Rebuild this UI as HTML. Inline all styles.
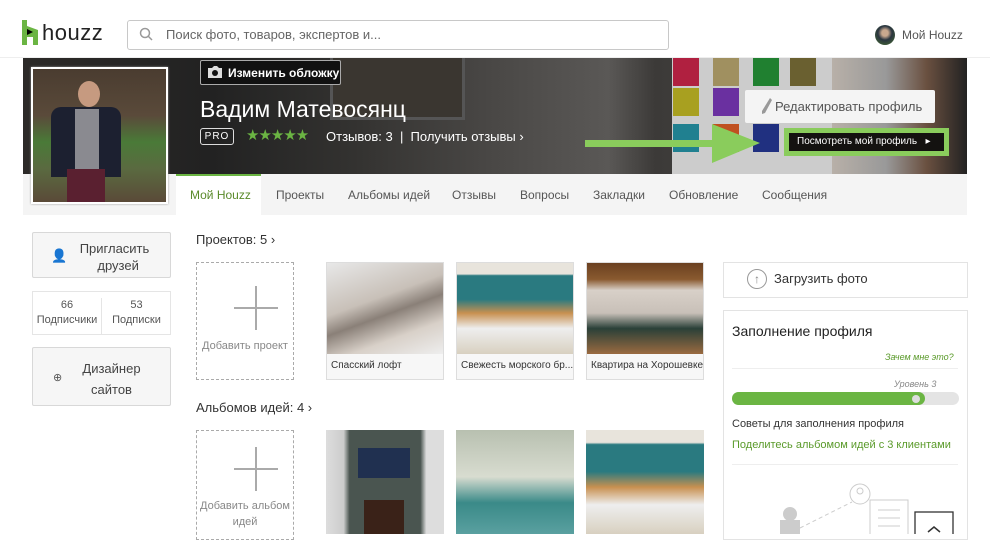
<!DOCTYPE html>
<html><head><meta charset="utf-8"><style>
*{margin:0;padding:0;box-sizing:border-box}
body{width:990px;height:534px;overflow:hidden;background:#fff;font-family:"Liberation Sans",Arial,sans-serif;color:#333;position:relative}
.a{position:absolute;white-space:nowrap}
.tile{position:absolute;width:26px;height:28px}
.tab{position:absolute;top:188px;font-size:12px;color:#555}
.card{position:absolute;width:118px;height:118px;border:1px solid #ddd;background:#f7f7f7}
.card .img{height:91px}
.card .cap{font-size:10px;color:#333;padding:6px 4px;white-space:nowrap;overflow:hidden}
.btn{position:absolute;left:32px;width:139px;border:1px solid #d8d8d8;border-radius:2px;background:#f6f6f6;font-size:13px;color:#444;text-align:center}
</style></head><body>
<!-- header -->
<div class="a" style="left:22px;top:20px;width:16px;height:25px">
<svg width="16" height="25" viewBox="0 0 16 25"><path d="M0 0h5v6l11 4v15h-5v-8H5v8H0z" fill="#6bb543"/><path d="M5 9l6 3-6 3z" fill="#000"/></svg></div>
<div class="a" style="left:42px;top:20px;font-size:22px;color:#222;letter-spacing:0.5px">houzz</div>
<div class="a" style="left:127px;top:20px;width:542px;height:30px;border:1px solid #c8c8c8;border-radius:3px"></div>
<svg class="a" style="left:139px;top:27px" width="14" height="14"><circle cx="6" cy="6" r="4.5" stroke="#999" stroke-width="1.5" fill="none"/><path d="M9 9l4 4" stroke="#999" stroke-width="1.5"/></svg>
<div class="a" style="left:166px;top:27px;font-size:13px;color:#666">Поиск фото, товаров, экспертов и...</div>
<div class="a" style="left:875px;top:25px;width:20px;height:20px;border-radius:50%;background:radial-gradient(circle at 50% 40%,#c9a88e 20%,#2a3540 45%,#3d5a35 80%)"></div>
<div class="a" style="left:902px;top:28px;font-size:12px;color:#555">Мой Houzz</div>
<div class="a" style="left:0;top:57px;width:990px;height:1px;background:#eee"></div>
<!-- cover -->
<div class="a" style="left:23px;top:58px;width:944px;height:116px;background:linear-gradient(90deg,#2c2a28 0%,#222 20%,#333230 35%,#4a4846 50%,#5a5856 62%,#3c3a38 67%,#555 100%)"></div>
<div class="a" style="left:330px;top:58px;width:135px;height:62px;background:#3a3630;border:3px solid #555;border-top:none"></div>
<div class="a" style="left:672px;top:58px;width:160px;height:116px;background:#ccc"></div>
<div class="tile" style="left:673px;top:58px;background:#b02040"></div><div class="tile" style="left:713px;top:58px;background:#a09060"></div><div class="tile" style="left:753px;top:58px;background:#208030"></div><div class="tile" style="left:790px;top:58px;background:#6a6030"></div>
<div class="tile" style="left:673px;top:88px;background:#a8a020"></div><div class="tile" style="left:713px;top:88px;background:#6a30a0"></div>
<div class="tile" style="left:673px;top:124px;background:#208090"></div><div class="tile" style="left:713px;top:124px;background:#c05020"></div><div class="tile" style="left:753px;top:124px;background:#203080"></div>
<div class="a" style="left:832px;top:58px;width:135px;height:116px;background:linear-gradient(90deg,#b8b0a8,#999 40%,#6a5040 70%,#222)"></div>
<div class="a" style="left:200px;top:60px;width:141px;height:25px;background:#111;border:1px solid #aaa;border-radius:2px;color:#fff;font-size:12px;font-weight:bold;padding:5px 0 0 27px">Изменить обложку</div>
<svg class="a" style="left:207px;top:65px" width="16" height="14"><path d="M1 3h4l2-2h3l2 2h3v10H1z" fill="#ddd"/><circle cx="8" cy="8" r="3" fill="#111"/></svg>
<div class="a" style="left:200px;top:96px;font-size:23px;color:#fff">Вадим Матевосянц</div>
<div class="a" style="left:200px;top:128px;width:34px;height:17px;border:1px solid #ddd;border-radius:3px;color:#fff;font-size:10px;text-align:center;line-height:15px;letter-spacing:1px">PRO</div>
<div class="a" style="left:246px;top:126px;font-size:15px;color:#6bb543;letter-spacing:-1px">★★★★★</div>
<div class="a" style="left:326px;top:129px;font-size:13px;color:#fff">Отзывов: 3 &nbsp;|&nbsp; Получить отзывы ›</div>
<div class="a" style="left:745px;top:90px;width:190px;height:33px;background:#f4f4f4;border-radius:2px;font-size:13px;color:#555;padding:9px 0 0 30px">Редактировать профиль</div>
<svg class="a" style="left:761px;top:97px" width="12" height="18"><path d="M9 1l2 2-7 13-3 1 0-3z" fill="#999"/></svg>
<div class="a" style="left:585px;top:140px;width:130px;height:7px;background:#8acc5c"></div>
<svg class="a" style="left:712px;top:124px" width="50" height="40"><path d="M0 0l48 19L0 39z" fill="#8acc5c"/></svg>
<div class="a" style="left:784px;top:128px;width:165px;height:28px;border:5px solid #8acc5c;background:#141210;color:#fff;font-size:10px;padding:3px 0 0 8px">Посмотреть мой профиль &nbsp;&nbsp;▸</div>
<!-- tabs -->
<div class="a" style="left:23px;top:174px;width:944px;height:41px;background:#f4f4f4"></div>
<div class="a" style="left:176px;top:174px;width:85px;height:41px;background:#fff;border-top:2px solid #6bb543"></div>
<div class="tab" style="left:190px;color:#5a8a2a">Мой Houzz</div>
<div class="tab" style="left:276px">Проекты</div>
<div class="tab" style="left:348px">Альбомы идей</div>
<div class="tab" style="left:452px">Отзывы</div>
<div class="tab" style="left:520px">Вопросы</div>
<div class="tab" style="left:593px">Закладки</div>
<div class="tab" style="left:669px">Обновление</div>
<div class="tab" style="left:762px">Сообщения</div>
<!-- avatar -->
<div class="a" style="left:31px;top:67px;width:137px;height:137px;background:#fff;padding:2px;box-shadow:0 0 2px #999">
<div style="width:133px;height:133px;background:linear-gradient(180deg,#4a3c30 0%,#5a4a3a 35%,#4a7a38 55%,#5a6a40 75%,#5a4a38 100%);position:relative">
<div style="position:absolute;left:45px;top:12px;width:22px;height:26px;border-radius:50%;background:#c69a80"></div>
<div style="position:absolute;left:18px;top:38px;width:70px;height:70px;background:#1c2030;border-radius:10px 10px 0 0"></div>
<div style="position:absolute;left:42px;top:40px;width:24px;height:60px;background:#8a8a90"></div>
<div style="position:absolute;left:34px;top:100px;width:38px;height:33px;background:#5a2030"></div>
</div></div>
<!-- left column -->
<div class="btn" style="top:232px;height:46px;padding-top:7px;line-height:17px"><span style="position:absolute;left:18px;top:14px;font-size:13px;color:#555">👤</span><span style="margin-left:26px;display:inline-block">Пригласить<br>&nbsp;&nbsp;друзей</span></div>
<div class="a" style="left:32px;top:291px;width:139px;height:44px;border:1px solid #e5e5e5;font-size:11px;color:#555;text-align:center">
<div style="position:absolute;left:0;width:69px;top:6px;line-height:15px;border-right:1px solid #e5e5e5;height:36px">66<br>Подписчики</div>
<div style="position:absolute;left:69px;width:69px;top:6px;line-height:15px">53<br>Подписки</div></div>
<div class="btn" style="top:347px;height:59px;padding-top:10px;line-height:21px"><span style="position:absolute;left:20px;top:20px;font-size:11px;color:#555">⊕</span><span style="margin-left:20px;display:inline-block">Дизайнер<br>сайтов</span></div>
<!-- projects -->
<div class="a" style="left:196px;top:232px;font-size:13px;color:#333">Проектов: 5 ›</div>
<div class="a" style="left:196px;top:262px;width:98px;height:118px;border:1px dashed #aaa"></div>
<div class="a" style="top:307px;left:234px;width:44px;height:2px;background:#aaa"></div>
<div class="a" style="left:255px;top:286px;width:2px;height:44px;background:#aaa"></div>
<div class="a" style="left:196px;top:340px;width:98px;text-align:center;font-size:11px;color:#888">Добавить проект</div>
<div class="card" style="left:326px;top:262px"><div class="img" style="background:linear-gradient(160deg,#e8e8e8 0%,#c8c0b8 40%,#8a8078 55%,#d8d0c8 75%,#eee 100%)"></div><div class="cap">Спасский лофт</div></div>
<div class="card" style="left:456px;top:262px"><div class="img" style="background:linear-gradient(180deg,#e8e4dc 0%,#e8e4dc 12%,#2a7a80 14%,#2a7a80 40%,#c89050 55%,#eee 72%,#d8d0c0 100%)"></div><div class="cap">Свежесть морского бр...</div></div>
<div class="card" style="left:586px;top:262px"><div class="img" style="background:linear-gradient(180deg,#6a4020 0%,#8a5a30 18%,#d8d0c8 30%,#c8c0b8 55%,#2a4038 72%,#9a6a40 100%)"></div><div class="cap">Квартира на Хорошевке</div></div>
<!-- albums -->
<div class="a" style="left:196px;top:400px;font-size:13px;color:#333">Альбомов идей: 4 ›</div>
<div class="a" style="left:196px;top:430px;width:98px;height:110px;border:1px dashed #aaa"></div>
<div class="a" style="left:234px;top:468px;width:44px;height:2px;background:#aaa"></div>
<div class="a" style="left:255px;top:447px;width:2px;height:44px;background:#aaa"></div>
<div class="a" style="left:196px;top:498px;width:98px;text-align:center;font-size:11px;color:#888;line-height:16px">Добавить альбом<br>идей</div>
<div class="a" style="left:326px;top:430px;width:118px;height:104px;background:linear-gradient(90deg,#ddd 0%,#ccc 15%,#4a5550 20%,#4a5550 80%,#ddd 85%)"><div style="position:absolute;left:32px;top:18px;width:52px;height:30px;background:#203050"></div><div style="position:absolute;left:38px;top:70px;width:40px;height:34px;background:#3a2218"></div></div>
<div class="a" style="left:456px;top:430px;width:118px;height:104px;background:linear-gradient(180deg,#b8c0b0 0%,#d8dcd0 45%,#3a8a88 70%,#5aa0a0 100%)"></div>
<div class="a" style="left:586px;top:430px;width:118px;height:104px;background:linear-gradient(180deg,#e8e4dc 0%,#e8e4dc 12%,#2a7a80 14%,#2a7a80 40%,#c89050 55%,#eee 72%,#d8d0c0 100%)"></div>
<!-- right -->
<div class="a" style="left:723px;top:262px;width:245px;height:36px;border:1px solid #e3e3e3"></div>
<div class="a" style="left:747px;top:269px;width:20px;height:20px;border:1px solid #999;border-radius:50%;text-align:center;font-size:12px;color:#888;line-height:18px">↑</div>
<div class="a" style="left:774px;top:271px;font-size:13px;color:#333">Загрузить фото</div>
<div class="a" style="left:723px;top:310px;width:245px;height:230px;border:1px solid #e3e3e3"></div>
<div class="a" style="left:732px;top:323px;font-size:14px;color:#222">Заполнение профиля</div>
<div class="a" style="left:885px;top:352px;font-size:9px;color:#5a9a2a;font-style:italic">Зачем мне это?</div>
<div class="a" style="left:732px;top:368px;width:226px;height:1px;background:#eee"></div>
<div class="a" style="left:894px;top:379px;font-size:9px;color:#888;font-style:italic">Уровень 3</div>
<div class="a" style="left:732px;top:392px;width:227px;height:13px;border-radius:7px;background:#e4e4e4"></div>
<div class="a" style="left:732px;top:392px;width:193px;height:13px;border-radius:7px;background:#6bb543"></div>
<div class="a" style="left:912px;top:395px;width:8px;height:8px;border-radius:50%;background:#ddd"></div>
<div class="a" style="left:732px;top:418px;font-size:11px;color:#333">Советы для заполнения профиля</div>
<div class="a" style="left:732px;top:439px;font-size:11px;color:#5a9a2a">Поделитесь альбомом идей с 3 клиентами</div>
<div class="a" style="left:732px;top:464px;width:226px;height:1px;background:#eee"></div>
<svg class="a" style="left:770px;top:480px" width="190" height="54"><circle cx="90" cy="14" r="10" fill="none" stroke="#ccc"/><circle cx="90" cy="11" r="3" fill="none" stroke="#ccc"/><rect x="100" y="20" width="38" height="40" fill="#fff" stroke="#ccc"/><path d="M108 30h22M108 38h22M108 46h22" stroke="#ccc"/><path d="M30 48l52-26" stroke="#ccc" stroke-dasharray="4 3"/><circle cx="20" cy="34" r="7" fill="#ccc"/><rect x="10" y="40" width="20" height="14" fill="#ccc"/><rect x="145" y="32" width="38" height="30" fill="#fff" stroke="#333" stroke-width="1.3"/><path d="M158 52l6-5 6 5" stroke="#333" fill="none" stroke-width="1.5"/></svg>
</body></html>
